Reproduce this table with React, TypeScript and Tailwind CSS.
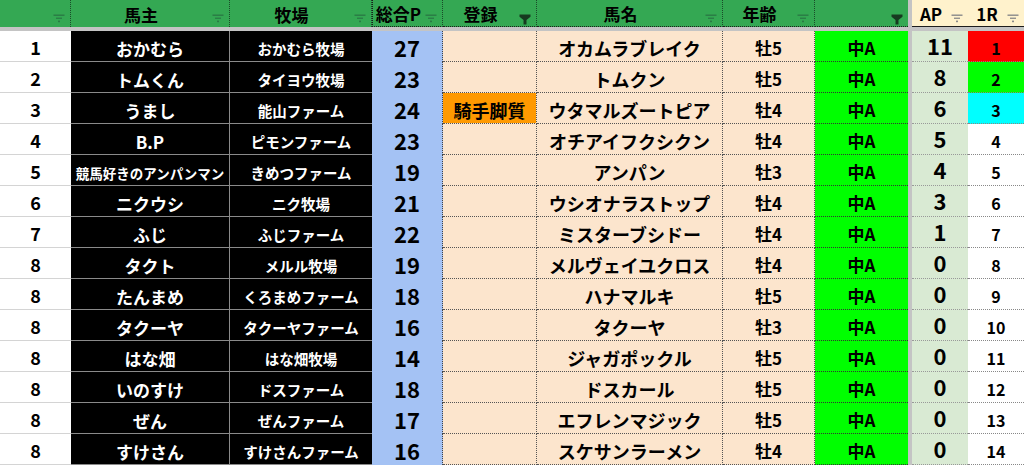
const COLS =
  "grid grid-cols-[71px_159px_142px_71px_94px_186px_92px_93px_4px_56px_56px]";

const FONT = {
  fontFamily: '"Noto Sans CJK JP", "Noto Sans", sans-serif',
};

type Row = {
  rank: string;
  owner: string;
  farm: string;
  total: string;
  tag: string;
  horse: string;
  age: string;
  ap: string;
  r1: string;
};

const rows: Row[] = [
  { rank: "1", owner: "おかむら", farm: "おかむら牧場", total: "27", tag: "", horse: "オカムラブレイク", age: "牡5", ap: "11", r1: "1" },
  { rank: "2", owner: "トムくん", farm: "タイヨウ牧場", total: "23", tag: "", horse: "トムクン", age: "牡5", ap: "8", r1: "2" },
  { rank: "3", owner: "うまし", farm: "能山ファーム", total: "24", tag: "騎手脚質", horse: "ウタマルズートピア", age: "牡4", ap: "6", r1: "3" },
  { rank: "4", owner: "B.P", farm: "ピモンファーム", total: "23", tag: "", horse: "オチアイフクシクン", age: "牡4", ap: "5", r1: "4" },
  { rank: "5", owner: "競馬好きのアンパンマン", farm: "きめつファーム", total: "19", tag: "", horse: "アンパン", age: "牡3", ap: "4", r1: "5" },
  { rank: "6", owner: "ニクウシ", farm: "ニク牧場", total: "21", tag: "", horse: "ウシオナラストップ", age: "牡4", ap: "3", r1: "6" },
  { rank: "7", owner: "ふじ", farm: "ふじファーム", total: "22", tag: "", horse: "ミスターブシドー", age: "牡4", ap: "1", r1: "7" },
  { rank: "8", owner: "タクト", farm: "メルル牧場", total: "19", tag: "", horse: "メルヴェイユクロス", age: "牡4", ap: "0", r1: "8" },
  { rank: "8", owner: "たんまめ", farm: "くろまめファーム", total: "18", tag: "", horse: "ハナマルキ", age: "牡5", ap: "0", r1: "9" },
  { rank: "8", owner: "タクーヤ", farm: "タクーヤファーム", total: "16", tag: "", horse: "タクーヤ", age: "牡3", ap: "0", r1: "10" },
  { rank: "8", owner: "はな畑", farm: "はな畑牧場", total: "14", tag: "", horse: "ジャガポックル", age: "牡5", ap: "0", r1: "11" },
  { rank: "8", owner: "いのすけ", farm: "ドスファーム", total: "18", tag: "", horse: "ドスカール", age: "牡5", ap: "0", r1: "12" },
  { rank: "8", owner: "ぜん", farm: "ぜんファーム", total: "17", tag: "", horse: "エフレンマジック", age: "牡5", ap: "0", r1: "13" },
  { rank: "8", owner: "すけさん", farm: "すけさんファーム", total: "16", tag: "", horse: "スケサンラーメン", age: "牡4", ap: "0", r1: "14" },
];

// 1R の色分け (上位3つだけ)
const r1Bg = ["bg-[#ff0000]", "bg-[#00ff00]", "bg-[#00ffff]"];

function FilterIcon({ active, grey }: { active?: boolean; grey?: boolean }) {
  if (active) {
    return (
      <svg width="12" height="11" viewBox="0 0 12 11" className="shrink-0">
        <path d="M0.5 0.5H11.5V2.8L7.5 6V10.5H4.5V6L0.5 2.8Z" fill="#173a20" />
      </svg>
    );
  }
  const c = grey ? "#8a8a8a" : "#2a7a45";
  return (
    <svg width="12" height="9" viewBox="0 0 12 9" className="shrink-0">
      <rect x="0.5" y="0.5" width="11" height="1.4" fill={c} />
      <rect x="3" y="3.6" width="6" height="1.3" fill={c} />
      <rect x="5" y="6.6" width="2" height="1.6" fill={c} />
    </svg>
  );
}

function Head({
  label,
  active,
  cream,
  extra = "",
}: {
  label: string;
  active?: boolean;
  cream?: boolean;
  extra?: string;
}) {
  return (
    <div
      className={`relative flex h-[27px] items-center justify-center pr-[18px] text-[17px] font-bold leading-none text-black ${
        cream ? "bg-[#fff2cc]" : "bg-[#34a853] border-r border-dotted border-[#1b4a2a]"
      } ${extra}`}
    >
      <span className="pt-[1px]">{label}</span>
      <div className="absolute right-[5px] top-[14px]">
        <FilterIcon active={active} grey={cream} />
      </div>
    </div>
  );
}

function Cell({
  children,
  className = "",
}: {
  children?: React.ReactNode;
  className?: string;
}) {
  return (
    <div
      className={`flex h-[31px] items-end justify-center whitespace-nowrap font-bold ${className}`}
    >
      {children}
    </div>
  );
}

export default function App() {
  return (
    <div className="h-[466px] w-[1024px] overflow-hidden bg-white" style={FONT}>
      {/* ヘッダー */}
      <div className={COLS}>
        <Head label="" />
        <Head label="馬主" />
        <Head label="牧場" />
        <Head label="総合P" extra="border-l border-l-[#1d1d1d] border-b border-b-[#1d1d1d]" />
        <Head label="登録" active extra="border-b border-b-[#1d1d1d]" />
        <Head label="馬名" extra="border-b border-b-[#1d1d1d]" />
        <Head label="年齢" extra="border-b border-b-[#1d1d1d]" />
        <Head label="" active extra="border-r-0 border-b border-b-[#1d1d1d]" />
        <div className="bg-[#c4c4c4]" />
        <Head label="AP" cream extra="border-b border-[#1d1d1d]" />
        <Head label="1R" cream extra="border-b border-[#1d1d1d]" />
      </div>
      <div className="h-[4px] bg-[#c4c4c4]" />

      {/* 本体 */}
      {rows.map((r, i) => (
        <div key={i} className={COLS}>
          <Cell className="border-b border-[#d4d4d4] bg-white pb-[3px] text-[18px] leading-[22px] text-black">
            {r.rank}
          </Cell>
          <Cell
            className={`border-b border-r border-[#8a8a8a] bg-black pb-[2px] leading-[20px] text-white ${
              r.owner.length > 8 ? "text-[13.5px]" : "text-[17px]"
            }`}
          >
            {r.owner}
          </Cell>
          <Cell className="border-b border-[#8a8a8a] bg-black pb-[3px] text-[14.5px] leading-[18px] text-white">
            {r.farm}
          </Cell>
          <Cell className="border-r border-dotted border-[#444] bg-[#a4c2f4] pb-[3px] text-[22px] leading-[24px] text-black">
            {r.total}
          </Cell>
          <Cell className="border-b border-r border-dotted border-[#555] bg-[#fce5cd] text-black">
            {r.tag && (
              <div className="flex h-full w-full items-end justify-center bg-[#ff9900] pb-[3px] text-[18px] leading-[20px]">
                {r.tag}
              </div>
            )}
          </Cell>
          <Cell className="border-b border-r border-dotted border-[#555] bg-[#fce5cd] pb-[3px] text-[18px] leading-[20px] text-black">
            {r.horse}
          </Cell>
          <Cell className="border-b border-r border-dotted border-[#555] bg-[#fce5cd] pb-[3px] text-[17px] leading-[20px] text-black">
            {r.age}
          </Cell>
          <Cell className="border-b border-dotted border-[#333] bg-[#00ff00] pb-[3px] text-[17px] leading-[20px] text-black">
            中A
          </Cell>
          <div className="bg-[#c4c4c4]" />
          <Cell className="border-b border-dotted border-[#999] bg-[#d9ead3] pb-[4px] text-[22px] leading-[24px] text-black">
            {r.ap}
          </Cell>
          <Cell
            className={`border-b border-dotted border-[#888] pb-[3px] text-[16px] leading-[20px] text-black ${
              r1Bg[i] ?? "bg-white"
            }`}
          >
            {r.r1}
          </Cell>
        </div>
      ))}
    </div>
  );
}
